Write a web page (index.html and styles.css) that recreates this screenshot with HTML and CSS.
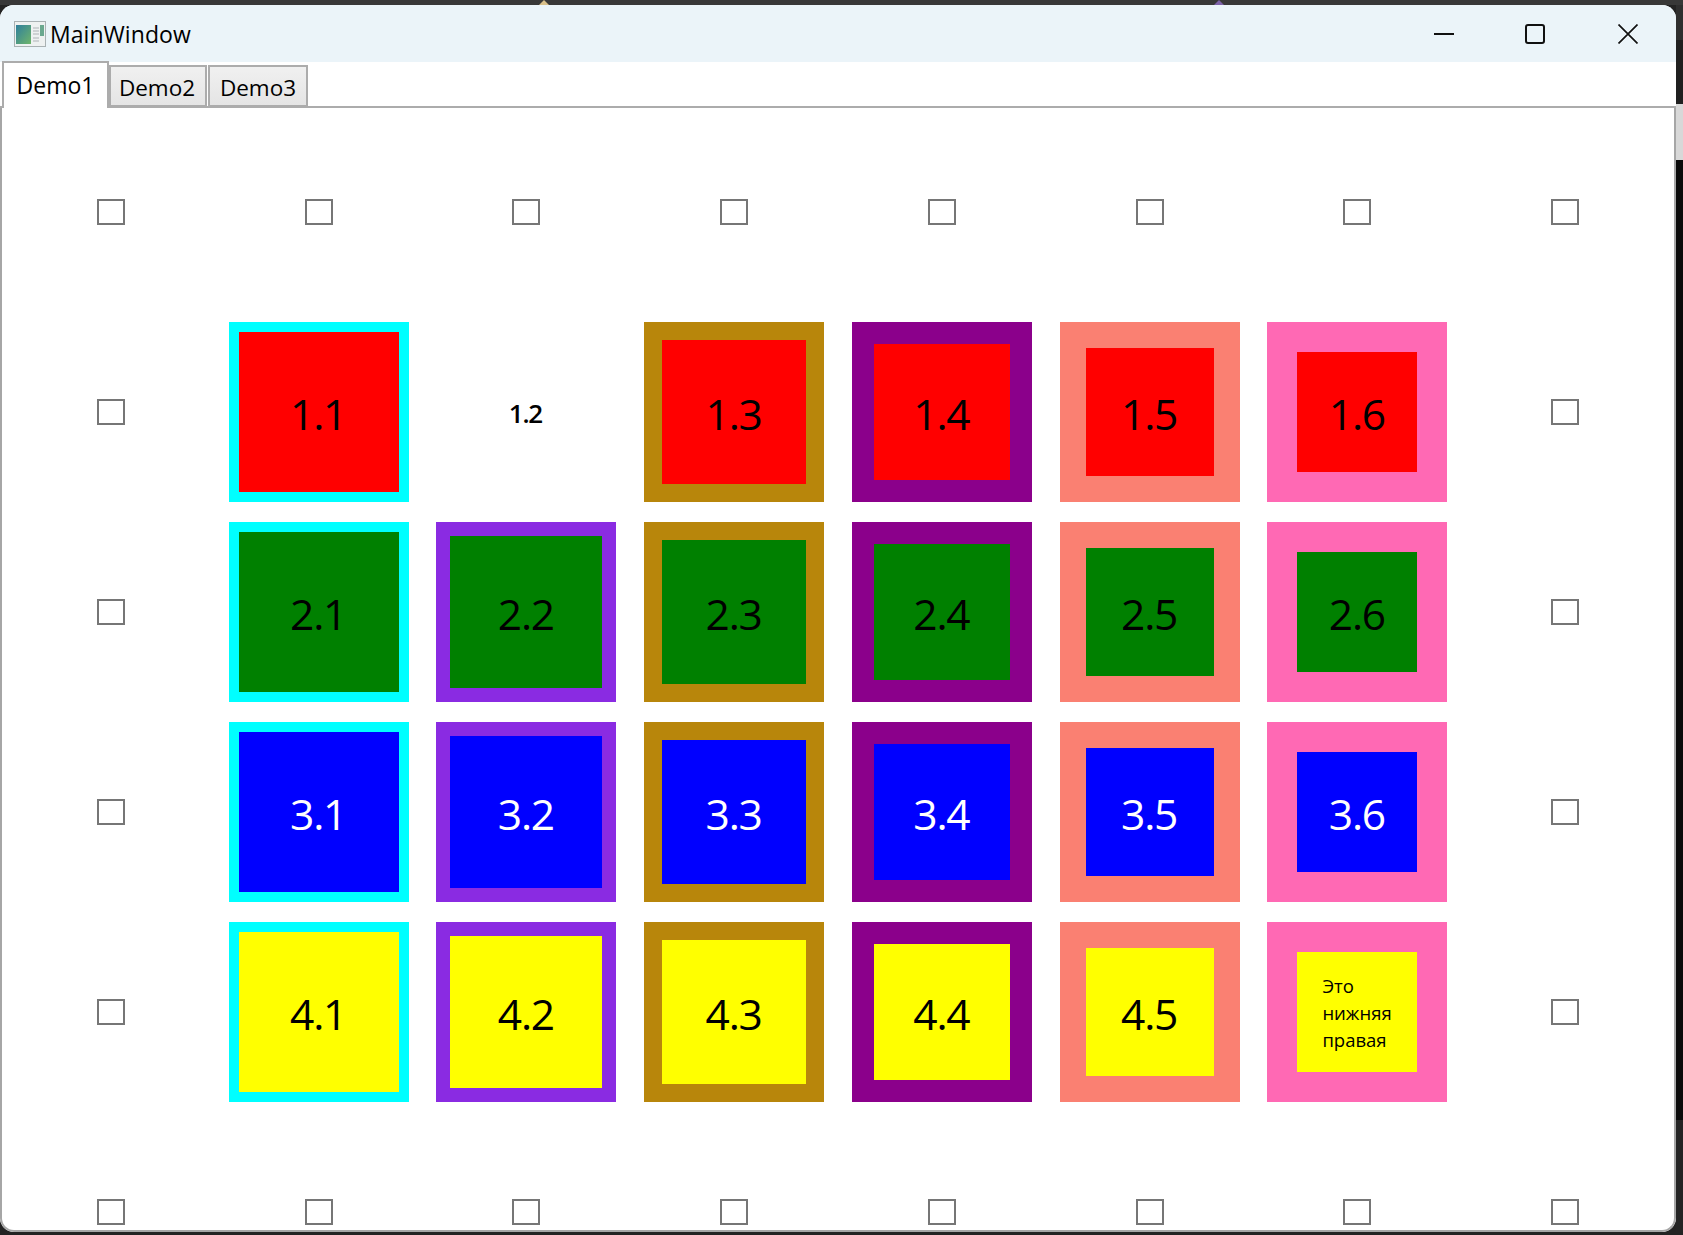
FILE: index.html
```html
<!DOCTYPE html>
<html lang="ru">
<head>
  <meta charset="UTF-8">
  <title>MainWindow</title>
  <link rel="stylesheet" href="styles.css">
</head>
<body>

<div class="top-strip">
  <span class="peak peak-tan"></span>
  <span class="peak peak-purple"></span>
</div>

<div class="desk">
  <div class="window">
    <div class="titlebar">
      <svg class="app-icon" width="32" height="26" viewBox="0 0 32 26">
        <defs>
          <linearGradient id="pane" x1="0" y1="0" x2="1" y2="1">
            <stop offset="0" stop-color="#2f7f9c"/>
            <stop offset="1" stop-color="#6fb56b"/>
          </linearGradient>
        </defs>
        <rect x="0.5" y="0.5" width="31" height="25" fill="#eef1f1" stroke="#a9b1b3"/>
        <rect x="2" y="4" width="15" height="19" fill="url(#pane)"/>
        <path d="M19 7h6M19 10h6M19 13h6M19 17h6M19 20h6" stroke="#c3c8ca" stroke-width="1.5"/>
        <rect x="26" y="4" width="4" height="11" fill="#6aa88f"/>
      </svg>
      <div class="title">MainWindow</div>
      <div class="controls">
        <div class="ctl">
          <svg width="20" height="20" viewBox="0 0 20 20"><path d="M0 10h20" stroke="#111" stroke-width="2"/></svg>
        </div>
        <div class="ctl ctl-max">
          <svg width="20" height="20" viewBox="0 0 20 20"><rect x="1" y="1" width="18" height="18" rx="2" fill="none" stroke="#111" stroke-width="2"/></svg>
        </div>
        <div class="ctl">
          <svg width="20" height="20" viewBox="0 0 20 20"><path d="M0.5 0.5l19 19M19.5 0.5l-19 19" stroke="#111" stroke-width="1.7"/></svg>
        </div>
      </div>
    </div>

    <div class="tabs">
      <div class="tab active">Demo1</div>
      <div class="tab">Demo2</div>
      <div class="tab tab-last">Demo3</div>
    </div>

    <div class="content">
      <div class="grid">
        <div class="cell"><span class="check"></span></div>
        <div class="cell"><span class="check"></span></div>
        <div class="cell"><span class="check"></span></div>
        <div class="cell"><span class="check"></span></div>
        <div class="cell"><span class="check"></span></div>
        <div class="cell"><span class="check"></span></div>
        <div class="cell"><span class="check"></span></div>
        <div class="cell"><span class="check"></span></div>

        <div class="cell"><span class="check"></span></div>
        <div class="cell"><div class="box b1 red">1.1</div></div>
        <div class="cell"><div class="plain">1.2</div></div>
        <div class="cell"><div class="box b3 red">1.3</div></div>
        <div class="cell"><div class="box b4 red">1.4</div></div>
        <div class="cell"><div class="box b5 red">1.5</div></div>
        <div class="cell"><div class="box b6 red">1.6</div></div>
        <div class="cell"><span class="check"></span></div>

        <div class="cell"><span class="check"></span></div>
        <div class="cell"><div class="box b1 green">2.1</div></div>
        <div class="cell"><div class="box b2 green">2.2</div></div>
        <div class="cell"><div class="box b3 green">2.3</div></div>
        <div class="cell"><div class="box b4 green">2.4</div></div>
        <div class="cell"><div class="box b5 green">2.5</div></div>
        <div class="cell"><div class="box b6 green">2.6</div></div>
        <div class="cell"><span class="check"></span></div>

        <div class="cell"><span class="check"></span></div>
        <div class="cell"><div class="box b1 blue">3.1</div></div>
        <div class="cell"><div class="box b2 blue">3.2</div></div>
        <div class="cell"><div class="box b3 blue">3.3</div></div>
        <div class="cell"><div class="box b4 blue">3.4</div></div>
        <div class="cell"><div class="box b5 blue">3.5</div></div>
        <div class="cell"><div class="box b6 blue">3.6</div></div>
        <div class="cell"><span class="check"></span></div>

        <div class="cell"><span class="check"></span></div>
        <div class="cell"><div class="box b1 yellow">4.1</div></div>
        <div class="cell"><div class="box b2 yellow">4.2</div></div>
        <div class="cell"><div class="box b3 yellow">4.3</div></div>
        <div class="cell"><div class="box b4 yellow">4.4</div></div>
        <div class="cell"><div class="box b5 yellow">4.5</div></div>
        <div class="cell"><div class="box b6 yellow note">Это нижняя правая</div></div>
        <div class="cell"><span class="check"></span></div>

        <div class="cell"><span class="check"></span></div>
        <div class="cell"><span class="check"></span></div>
        <div class="cell"><span class="check"></span></div>
        <div class="cell"><span class="check"></span></div>
        <div class="cell"><span class="check"></span></div>
        <div class="cell"><span class="check"></span></div>
        <div class="cell"><span class="check"></span></div>
        <div class="cell"><span class="check"></span></div>
      </div>
    </div>
  </div>

  <div class="side">
    <div class="side-a"></div>
    <div class="side-b"></div>
    <div class="side-c"></div>
    <div class="side-d"></div>
    <div class="side-e"></div>
  </div>
</div>

</body>
</html>
```

FILE: styles.css
```css
* { box-sizing: border-box; }

html, body {
  margin: 0;
  padding: 0;
  width: 100%;
  height: 100%;
  overflow: hidden;
  background: #232323;
  font-family: "Open Sans", "Noto Sans", sans-serif;
  color: #000;
}

body {
  display: flex;
  flex-direction: column;
}

.top-strip {
  height: 5px;
  flex-shrink: 0;
  background: #383838;
  position: relative;
  overflow: hidden;
}

.peak {
  position: absolute;
  top: 0;
  width: 12px;
  height: 6px;
  clip-path: polygon(50% 0, 100% 100%, 0 100%);
}
.peak-tan { left: 538px; background: #d9c08a; }
.peak-purple { left: 1213px; background: #7d62a8; }

.desk {
  display: flex;
  height: 1227px;
}

.window {
  width: 1676px;
  height: 1227px;
  flex-shrink: 0;
  display: flex;
  flex-direction: column;
  background: #fff;
  border-radius: 14px;
  overflow: hidden;
}

.titlebar {
  height: 57px;
  flex-shrink: 0;
  display: flex;
  align-items: center;
  background: #ebf4f9;
  padding-left: 14px;
}

.app-icon { flex-shrink: 0; }

.title {
  margin-left: 4px;
  font-size: 23px;
  letter-spacing: 0.05px;
}

.controls {
  margin-left: auto;
  display: flex;
  padding-right: 2px;
}

.ctl {
  width: 92px;
  height: 57px;
  display: flex;
  align-items: center;
  justify-content: center;
}

.ctl-max { padding-right: 2px; }

.tabs {
  height: 46px;
  flex-shrink: 0;
  display: flex;
  align-items: flex-end;
  padding-left: 2px;
  border-bottom: 2px solid #acacac;
}

.tab {
  width: 98px;
  height: 42px;
  margin-bottom: -1px;
  padding: 2px 2px 0 0;
  display: flex;
  align-items: center;
  justify-content: center;
  font-size: 22.5px;
  border: 2px solid #acacac;
  background: linear-gradient(#f0f0f0, #e5e5e5);
}

.tab-last { width: 100px; margin-left: 1px; padding-right: 0; }

.tab.active {
  width: 107px;
  height: 47px;
  margin-bottom: -2px;
  padding: 0 0 1px;
  font-size: 23px;
  background: #fff;
  border-bottom: 0;
}

.content {
  flex: 1;
  min-height: 0;
  overflow: hidden;
  padding: 4px 0 0 5px;
  border-left: 2px solid #a6a6a6;
  border-right: 2px solid #a6a6a6;
  border-bottom: 2px solid #a6a6a6;
  border-radius: 0 0 14px 14px;
}

.grid {
  width: 1662px;
  display: grid;
  grid-template-columns: repeat(8, 1fr);
  grid-auto-rows: 200px;
}

.cell {
  display: flex;
  align-items: center;
  justify-content: center;
}

.check {
  width: 28px;
  height: 26px;
  border: 2px solid #767676;
  background: #fff;
}

.box,
.plain {
  width: 180px;
  height: 180px;
  display: flex;
  align-items: center;
  justify-content: center;
}

.box {
  font-size: 42.5px;
  letter-spacing: -1.2px;
  padding: 2px 1px 0 0;
  border-style: solid;
}

.plain {
  font-size: 26px;
  font-weight: 600;
  letter-spacing: -1.2px;
  padding: 2px 2px 0 0;
}

.b1 { border-width: 10px; border-color: #00ffff; }
.b2 { border-width: 14px; border-color: #8a2be2; }
.b3 { border-width: 18px; border-color: #b8860b; }
.b4 { border-width: 22px; border-color: #8b008b; }
.b5 { border-width: 26px; border-color: #fa8072; }
.b6 { border-width: 30px; border-color: #ff69b4; }

.red { background: #ff0000; }
.green { background: #008000; }
.blue { background: #0000ff; color: #fff; }
.yellow { background: #ffff00; }

.box.note {
  font-size: 18.5px;
  letter-spacing: 0;
  line-height: 26.8px;
  padding: 3px 25px 0;
  justify-content: flex-start;
}

.side {
  flex: 1;
  display: flex;
  flex-direction: column;
}

.side-a { height: 35px; background: #2f2f2f; }
.side-b { height: 64px; background: #202020; }
.side-c { height: 56px; background: #d8d8d8; }
.side-d { height: 960px; background: #0a0a0a; }
.side-e { flex: 1; background: #242424; }
```
